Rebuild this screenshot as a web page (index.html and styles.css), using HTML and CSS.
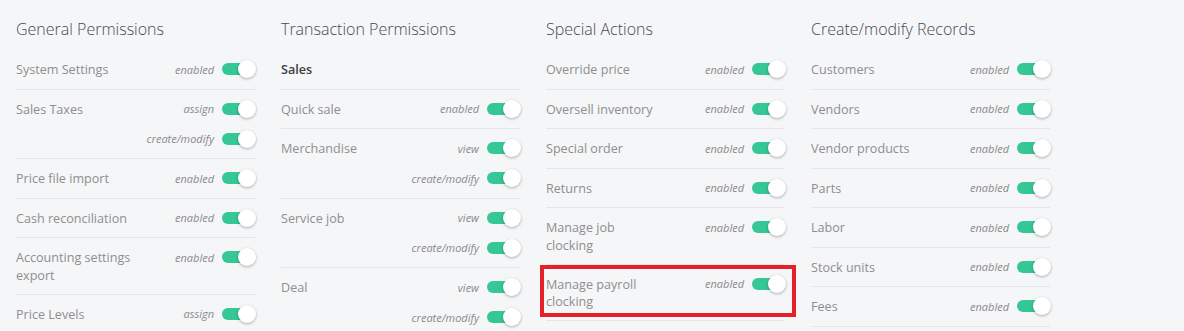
FILE: index.html
```html
<!DOCTYPE html>
<html lang="en">
<head>
	<meta charset="UTF-8">
	<title>Permissions</title>
	<link rel="stylesheet" href="styles.css">
</head>
<body>
	<div class="perms">
		<!-- general -->
		<section class="col">
			<h2>General Permissions</h2>
			<div class="row">
				<div class="name">System Settings</div>
				<div class="opts">
					<div class="opt"><span class="opt-label">enabled</span><span class="toggle"></span></div>
				</div>
			</div>
			<div class="row">
				<div class="name">Sales Taxes</div>
				<div class="opts">
					<div class="opt"><span class="opt-label">assign</span><span class="toggle"></span></div>
					<div class="opt"><span class="opt-label">create/modify</span><span class="toggle"></span></div>
				</div>
			</div>
			<div class="row">
				<div class="name">Price file import</div>
				<div class="opts">
					<div class="opt"><span class="opt-label">enabled</span><span class="toggle"></span></div>
				</div>
			</div>
			<div class="row">
				<div class="name">Cash reconciliation</div>
				<div class="opts">
					<div class="opt"><span class="opt-label">enabled</span><span class="toggle"></span></div>
				</div>
			</div>
			<div class="row">
				<div class="name">Accounting settings export</div>
				<div class="opts">
					<div class="opt"><span class="opt-label">enabled</span><span class="toggle"></span></div>
				</div>
			</div>
			<div class="row">
				<div class="name">Price Levels</div>
				<div class="opts">
					<div class="opt"><span class="opt-label">assign</span><span class="toggle"></span></div>
				</div>
			</div>
		</section>

		<!-- transactions -->
		<section class="col">
			<h2>Transaction Permissions</h2>
			<div class="row">
				<div class="name sub">Sales</div>
			</div>
			<div class="row">
				<div class="name">Quick sale</div>
				<div class="opts">
					<div class="opt"><span class="opt-label">enabled</span><span class="toggle"></span></div>
				</div>
			</div>
			<div class="row">
				<div class="name">Merchandise</div>
				<div class="opts">
					<div class="opt"><span class="opt-label">view</span><span class="toggle"></span></div>
					<div class="opt"><span class="opt-label">create/modify</span><span class="toggle"></span></div>
				</div>
			</div>
			<div class="row">
				<div class="name">Service job</div>
				<div class="opts">
					<div class="opt"><span class="opt-label">view</span><span class="toggle"></span></div>
					<div class="opt"><span class="opt-label">create/modify</span><span class="toggle"></span></div>
				</div>
			</div>
			<div class="row">
				<div class="name">Deal</div>
				<div class="opts">
					<div class="opt"><span class="opt-label">view</span><span class="toggle"></span></div>
					<div class="opt"><span class="opt-label">create/modify</span><span class="toggle"></span></div>
				</div>
			</div>
		</section>

		<!-- special -->
		<section class="col">
			<h2>Special Actions</h2>
			<div class="row">
				<div class="name">Override price</div>
				<div class="opts">
					<div class="opt"><span class="opt-label">enabled</span><span class="toggle"></span></div>
				</div>
			</div>
			<div class="row">
				<div class="name">Oversell inventory</div>
				<div class="opts">
					<div class="opt"><span class="opt-label">enabled</span><span class="toggle"></span></div>
				</div>
			</div>
			<div class="row">
				<div class="name">Special order</div>
				<div class="opts">
					<div class="opt"><span class="opt-label">enabled</span><span class="toggle"></span></div>
				</div>
			</div>
			<div class="row">
				<div class="name">Returns</div>
				<div class="opts">
					<div class="opt"><span class="opt-label">enabled</span><span class="toggle"></span></div>
				</div>
			</div>
			<div class="row">
				<div class="name">Manage job clocking</div>
				<div class="opts">
					<div class="opt"><span class="opt-label">enabled</span><span class="toggle"></span></div>
				</div>
			</div>
			<div class="row marked">
				<div class="name">Manage payroll clocking</div>
				<div class="opts">
					<div class="opt"><span class="opt-label">enabled</span><span class="toggle"></span></div>
				</div>
				<div class="callout"></div>
			</div>
		</section>

		<!-- records -->
		<section class="col">
			<h2>Create/modify Records</h2>
			<div class="row">
				<div class="name">Customers</div>
				<div class="opts">
					<div class="opt"><span class="opt-label">enabled</span><span class="toggle"></span></div>
				</div>
			</div>
			<div class="row">
				<div class="name">Vendors</div>
				<div class="opts">
					<div class="opt"><span class="opt-label">enabled</span><span class="toggle"></span></div>
				</div>
			</div>
			<div class="row">
				<div class="name">Vendor products</div>
				<div class="opts">
					<div class="opt"><span class="opt-label">enabled</span><span class="toggle"></span></div>
				</div>
			</div>
			<div class="row">
				<div class="name">Parts</div>
				<div class="opts">
					<div class="opt"><span class="opt-label">enabled</span><span class="toggle"></span></div>
				</div>
			</div>
			<div class="row">
				<div class="name">Labor</div>
				<div class="opts">
					<div class="opt"><span class="opt-label">enabled</span><span class="toggle"></span></div>
				</div>
			</div>
			<div class="row">
				<div class="name">Stock units</div>
				<div class="opts">
					<div class="opt"><span class="opt-label">enabled</span><span class="toggle"></span></div>
				</div>
			</div>
			<div class="row">
				<div class="name">Fees</div>
				<div class="opts">
					<div class="opt"><span class="opt-label">enabled</span><span class="toggle"></span></div>
				</div>
			</div>
		</section>
	</div>
</body>
</html>
```

FILE: styles.css
```css
* {
	margin: 0;
	padding: 0;
	box-sizing: border-box;
}
body {
	background-color: #f5f6f8;
	font-family: "Open Sans", "Liberation Sans", sans-serif;
	overflow: hidden;
}
.perms {
	display: flex;
	gap: 26px;
	padding: 0 16px;
}
.col {
	width: 239px;
	flex: none;
}
.col h2 {
	font-size: 16px;
	font-weight: 300;
	line-height: 22px;
	color: #474a4f;
	padding-top: 18px;
	margin-bottom: 10px;
}
.row {
	display: flex;
	justify-content: space-between;
	align-items: flex-start;
	padding: 9px 0 9.5px;
	border-bottom: 1px solid #e4e6e9;
	min-height: 39.5px;
}
.name {
	width: 117px;
	font-size: 12.6px;
	line-height: 17.5px;
	padding-top: 2px;
	color: #8e8e8e;
}
.name.sub {
	font-weight: 600;
	color: #3d3f42;
}
.opts {
	display: flex;
	flex-direction: column;
	align-items: flex-end;
	gap: 10px;
	margin-right: -1px;
}
.opt {
	display: flex;
	align-items: center;
	gap: 8px;
	height: 20px;
}
.opt-label {
	font-size: 11px;
	font-style: italic;
	color: #8a8a8a;
}
.toggle {
	width: 34px;
	height: 20px;
	position: relative;
}
.toggle::before {
	content: "";
	position: absolute;
	left: 0;
	top: 4px;
	width: 30px;
	height: 12px;
	border-radius: 6px;
	background-color: #35c795;
}
.toggle::after {
	content: "";
	position: absolute;
	right: 0;
	top: 1px;
	width: 18px;
	height: 18px;
	border-radius: 50%;
	background-color: #fff;
	box-shadow: 0 1px 3px rgba(0,0,0,0.3);
}
.marked {
	position: relative;
}
.callout {
	position: absolute;
	left: -6px;
	right: -11px;
	top: 0;
	bottom: 3px;
	border: 4px solid #e42129;
}
```
